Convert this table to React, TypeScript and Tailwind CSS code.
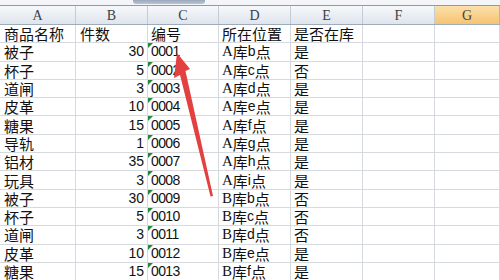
import React from "react";

const rows: [string, string, string, string, string][] = [
  ["被子", "30", "0001", "A库b点", "是"],
  ["杯子", "5", "0002", "A库c点", "否"],
  ["道闸", "3", "0003", "A库d点", "是"],
  ["皮革", "10", "0004", "A库e点", "是"],
  ["糖果", "15", "0005", "A库f点", "是"],
  ["导轨", "1", "0006", "A库g点", "是"],
  ["铝材", "35", "0007", "A库h点", "是"],
  ["玩具", "3", "0008", "A库i点", "是"],
  ["被子", "30", "0009", "B库b点", "否"],
  ["杯子", "5", "0010", "B库c点", "否"],
  ["道闸", "3", "0011", "B库d点", "否"],
  ["皮革", "10", "0012", "B库e点", "是"],
  ["糖果", "15", "0013", "B库f点", "是"],
];

const cols = "grid grid-cols-[76px_72px_71px_72px_72px_72px_65px]";
const cjk = { fontFamily: '"Noto Sans CJK SC", "Liberation Sans", sans-serif' };
const num = { fontFamily: '"Liberation Sans", "Noto Sans CJK SC", sans-serif' };

function Cell({ children, className = "" }: { children?: React.ReactNode; className?: string }) {
  return (
    <div className={`relative h-[18.3px] border-r border-b border-[#d6d9dd] whitespace-nowrap flex items-center text-[15px] leading-[17px] text-[#111] ${className}`}>
      {children}
    </div>
  );
}

function Tri() {
  return (
    <div className="absolute left-0 top-0 w-0 h-0 border-t-[5px] border-t-[#1f8a3b] border-r-[5px] border-r-transparent" />
  );
}

export default function App() {
  const headers = ["A", "B", "C", "D", "E", "F", "G"];
  return (
    <div className="relative w-[500px] h-[280px] overflow-hidden bg-white">
      <div className="h-[5px] bg-[#f3f5f8] flex">
        <div className="ml-[133px] w-[72px] h-[4px] rounded-b-[3px] bg-gradient-to-b from-[#9aa9bb] to-[#b9c5d3]" />
      </div>
      <div className="h-px bg-[#8d9bab]" />
      <div className={`${cols} h-[19px] border-b border-[#9eabb9]`}>
        {headers.map((h) => (
          <div
            key={h}
            className={`flex items-center justify-center border-r text-[14px] leading-[17px] ${
              h === "G"
                ? "bg-gradient-to-b from-[#fbe0aa] to-[#f5c46f] border-[#e0b060] text-[#444]"
                : "bg-gradient-to-b from-[#f6f8fb] to-[#dfe5ec] border-[#c4ccd6] text-[#3b3f45]"
            }`}
            style={{ fontFamily: '"Liberation Serif", serif' }}
          >
            {h}
          </div>
        ))}
      </div>
      <div className={cols} style={cjk}>
        <Cell className="pl-[4px]">商品名称</Cell>
        <Cell className="pl-[4px]">件数</Cell>
        <Cell className="pl-[3px]">编号</Cell>
        <Cell className="pl-[3px]">所在位置</Cell>
        <Cell className="pl-[3px]">是否在库</Cell>
        <Cell />
        <Cell />
      </div>
      {rows.map((r, i) => (
        <div key={i} className={cols} style={cjk}>
          <Cell className="pl-[4px]">{r[0]}</Cell>
          <Cell className="justify-end pr-[3px]">
            <span style={num} className="text-[14px]">{r[1]}</span>
          </Cell>
          <Cell className="pl-[3px]">
            <Tri />
            <span style={num} className="text-[14px] tracking-[-0.6px]">{r[2]}</span>
          </Cell>
          <Cell className="pl-[3px]">
            <span style={{ fontFamily: '"Liberation Serif", "Noto Sans CJK SC", serif' }}>{r[3][0]}</span>
            <span>{r[3][1]}</span>
            <span style={{ fontFamily: '"Liberation Sans", sans-serif' }} className="text-[14px]">{r[3][2]}</span>
            <span>{r[3][3]}</span>
          </Cell>
          <Cell className="pl-[3px]">{r[4]}</Cell>
          <Cell />
          <Cell />
        </div>
      ))}
      <div className={cols}>
        <Cell />
        <Cell />
        <Cell>
          <Tri />
        </Cell>
        <Cell />
        <Cell />
        <Cell />
        <Cell />
      </div>
      <svg className="absolute left-0 top-0 pointer-events-none" width="500" height="280" viewBox="0 0 500 280">
        <path d="M177 53 L190 69 L185.5 71 L213 196 L210.5 196.5 L180 75 L174 78 Z" fill="#e3413f" />
      </svg>
    </div>
  );
}
